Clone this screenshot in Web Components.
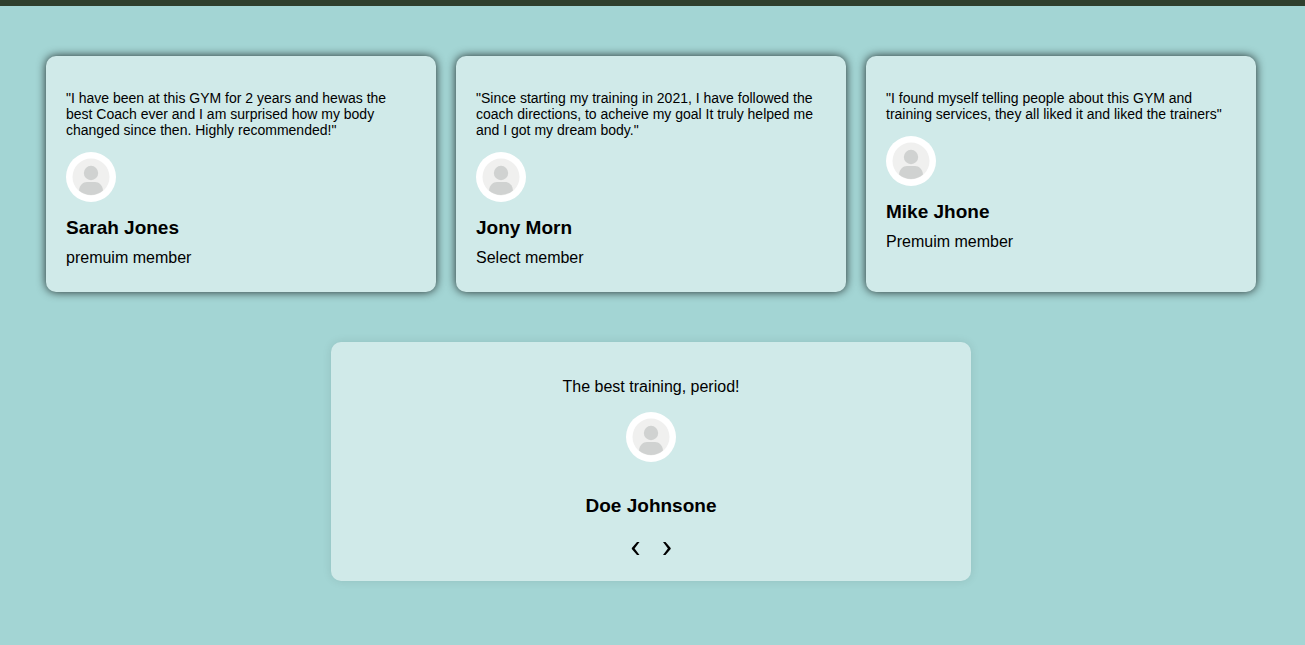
<!DOCTYPE html>
<html lang="en">
<head>
<meta charset="utf-8">
<title>Testimonials</title>
<style>
html{background:#a3d5d4}
body{margin:0;font-family:"Liberation Sans",Arial,sans-serif;font-size:16px;color:#000}
</style>
</head>
<body>
<gym-testimonials></gym-testimonials>
<script>
customElements.define('user-avatar', class extends HTMLElement {
  constructor(){
    super();
    this.attachShadow({mode:'open'}).innerHTML = `
<style>:host{display:block;width:50px;height:50px}svg{display:block}</style>
<svg width="50" height="50" viewBox="0 0 50 50" aria-hidden="true">
<circle cx="25" cy="25" r="25" fill="#fff"/><circle cx="25" cy="25" r="18.500" fill="#f0f0ef"/>
<circle cx="25" cy="21" r="7.200" fill="#d0d2d1"/>
<path d="M13 38.500C13.500 33 17 30 21 30H29C33 30 36.500 33 37 38.500A18.500 18.500 0 0 1 13 38.500Z" fill="#d0d2d1"/>
</svg>`;
  }
});
customElements.define('member-card', class extends HTMLElement {
  constructor(){
    super();
    this.attachShadow({mode:'open'}).innerHTML = `
<style>
:host{display:block;box-sizing:border-box;padding:20px 20px 25px;border-radius:10px;background:#d0eae9;box-shadow:0 0 10px #000c}
p{margin:14px 0;font-size:14px;line-height:16px}
h3{margin:15px 0 10px;font-size:19px;line-height:22px}
div{line-height:18px}
</style>
<p><slot name="quote"></slot></p><user-avatar></user-avatar>
<h3><slot name="name"></slot></h3><div><slot name="role"></slot></div>`;
  }
});
customElements.define('review-slider', class extends HTMLElement {
  constructor(){
    super();
    this.attachShadow({mode:'open'}).innerHTML = `
<style>
:host{display:flex;flex-direction:column;align-items:center;box-sizing:border-box;width:100%;max-width:640px;padding:20px;border-radius:10px;background:#d0eae9;box-shadow:0 0 10px #0000001a;text-align:center}
p{margin:16px 0;line-height:18px}
user-avatar{margin-bottom:33px}
h3{margin:0 0 20px;font-size:19px;line-height:22px}
nav{display:flex;gap:12px}
button{width:20px;height:24px;padding:0;border:0;background:none;color:#000;cursor:pointer}
svg{display:block;fill:currentColor}
</style>
<p><slot name="quote"></slot></p><user-avatar></user-avatar><h3><slot name="name"></slot></h3>
<nav aria-label="Reviews">
<button type="button" aria-label="Previous"><svg width="20" height="24" viewBox="0 0 20 24" aria-hidden="true"><path d="M12 5H14.500L9.600 11.500L14.500 18H12L6.800 12V11Z"/></svg></button>
<button type="button" aria-label="Next"><svg width="20" height="24" viewBox="0 0 20 24" aria-hidden="true"><path d="M8.500 5H6L10.900 11.500L6 18H8.500L13.700 12V11Z"/></svg></button>
</nav>`;
  }
});
customElements.define('gym-testimonials', class extends HTMLElement {
  constructor(){
    super();
    this.attachShadow({mode:'open'}).innerHTML = `
<style>
:host{display:block;border-top:6px solid #2f3f2d}
main{display:flex;flex-direction:column;align-items:center;gap:50px;padding:50px 49px 64px 46px}
section{display:grid;grid-template-columns:repeat(3,1fr);gap:20px;width:100%}
@media(max-width:800px){section{grid-template-columns:1fr}}
</style>
<main><section>
<member-card><span slot="quote">"I have been at this GYM for 2 years and hewas the best Coach ever and I am surprised how my body changed since then. Highly recommended!"</span><span slot="name">Sarah Jones</span><span slot="role">premuim member</span></member-card>
<member-card><span slot="quote">"Since starting my training in 2021, I have followed the coach directions, to acheive my goal It truly helped me and I got my dream body."</span><span slot="name">Jony Morn</span><span slot="role">Select member</span></member-card>
<member-card><span slot="quote">"I found myself telling people about this GYM and training services, they all liked it and liked the trainers"</span><span slot="name">Mike Jhone</span><span slot="role">Premuim member</span></member-card>
</section>
<review-slider><span slot="quote">The best training, period!</span><span slot="name">Doe Johnsone</span></review-slider></main>`;
  }
});
</script>
</body>
</html>
